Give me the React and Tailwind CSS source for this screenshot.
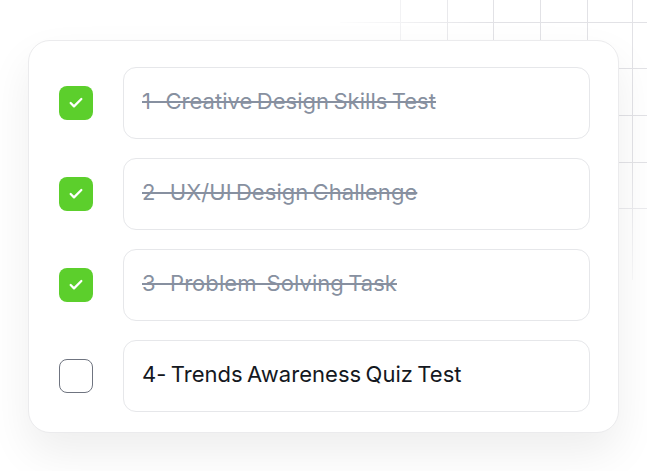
import { Check } from "lucide-react";

const tasks = [
  { label: "1- Creative Design Skills Test", done: true },
  { label: "2- UX/UI Design Challenge", done: true },
  { label: "3- Problem-Solving Task", done: true },
  { label: "4- Trends Awareness Quiz Test", done: false },
];

function GridBackdrop() {
  const xs = [400, 447, 493, 540, 587, 632];
  const ys = [22, 68, 115, 162, 208];
  return (
    <svg
      className="absolute top-0 left-0 pointer-events-none"
      width="647"
      height="471"
      style={{
        maskImage: "radial-gradient(circle at 647px 0px, black 0px, black 160px, transparent 320px)",
        WebkitMaskImage: "radial-gradient(circle at 647px 0px, black 0px, black 160px, transparent 320px)",
      }}
    >
      {xs.map((x) => (
        <line key={"x" + x} x1={x + 0.5} y1="0" x2={x + 0.5} y2="280" stroke="#e2e2e6" strokeWidth="1" />
      ))}
      {ys.map((y) => (
        <line key={"y" + y} x1="340" y1={y + 0.5} x2="647" y2={y + 0.5} stroke="#e2e2e6" strokeWidth="1" />
      ))}
    </svg>
  );
}

export default function App() {
  return (
    <div className="relative w-[647px] h-[471px] bg-white overflow-hidden font-['Inter',sans-serif]">
      <GridBackdrop />
      <div className="relative pl-[28px] pt-[40px]">
        <div className="w-[591px] h-[393px] bg-white rounded-[22px] border border-[#ebebed] shadow-[0_20px_44px_rgba(0,0,0,0.07)] pt-[26px] pl-[30px] pr-[28px] flex flex-col gap-[19px]">
          {tasks.map((t) => (
            <div key={t.label} className="flex items-center gap-[30px]">
              {t.done ? (
                <div className="w-[34px] h-[34px] rounded-[8px] bg-[#5ccf2c] flex items-center justify-center">
                  <Check className="w-[16px] h-[16px] text-white" strokeWidth={3.4} />
                </div>
              ) : (
                <div className="w-[34px] h-[34px] rounded-[8px] border border-[#6f7480] bg-white" />
              )}
              <div className="flex-1 h-[72px] rounded-[13px] border border-[#e6e7ea] flex items-center px-[18px] pb-[3px]">
                <span
                  className={
                    t.done
                      ? "text-[22px] tracking-[0.05px] [word-spacing:-2px] text-[#8790a0] line-through decoration-[1.5px]"
                      : "text-[22px] tracking-[0.05px] [word-spacing:-2px] text-[#141821]"
                  }
                >
                  {t.label}
                </span>
              </div>
            </div>
          ))}
        </div>
      </div>
    </div>
  );
}
